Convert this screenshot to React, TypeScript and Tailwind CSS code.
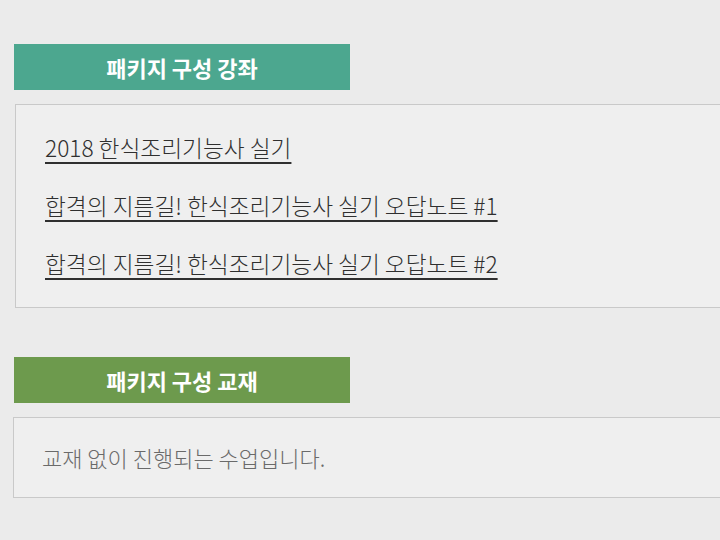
const links = [
  "2018 한식조리기능사 실기",
  "합격의 지름길! 한식조리기능사 실기 오답노트 #1",
  "합격의 지름길! 한식조리기능사 실기 오답노트 #2",
];

function SectionTitle({ label, color }: { label: string; color: string }) {
  return (
    <div
      className={`flex h-[46px] w-[336px] items-center justify-center text-[22px] font-bold text-white ${color}`}
    >
      {label}
    </div>
  );
}

export default function App() {
  return (
    <div
      className="h-[540px] w-[720px] overflow-hidden bg-[#ebebeb]"
      style={{ fontFamily: '"Noto Sans CJK KR", "Noto Sans", sans-serif' }}
    >
      <div className="pl-[14px] pt-[44px]">
        <SectionTitle label="패키지 구성 강좌" color="bg-[#4ca78f]" />

        <div className="ml-px mt-[14px] w-[740px] border border-[#c9c9c9] bg-[#efefef] py-[14px] pl-[29px]">
          {links.map((text) => (
            <div key={text} className="flex h-[58px] items-center">
              <a
                href="#"
                className="text-[22.7px] font-light text-[#2f2f2f] underline underline-offset-[5px]"
              >
                {text}
              </a>
            </div>
          ))}
        </div>

        <div className="mt-[49px]">
          <SectionTitle label="패키지 구성 교재" color="bg-[#6d9a4d]" />
        </div>

        <div className="-ml-px mt-[14px] flex h-[81px] w-[740px] items-center border border-[#c9c9c9] bg-[#efefef] pl-[28px]">
          <p className="text-[22px] font-light text-[#6a6a6a]">
            교재 없이 진행되는 수업입니다.
          </p>
        </div>
      </div>
    </div>
  );
}
